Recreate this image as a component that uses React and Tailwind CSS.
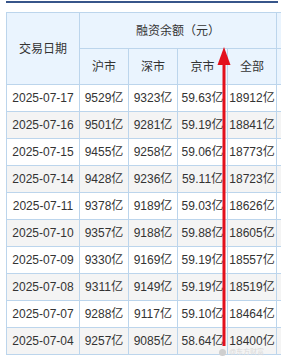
import React from "react";

const rows = [
  ["2025-07-17", "9529亿", "9323亿", "59.63亿", "18912亿"],
  ["2025-07-16", "9501亿", "9281亿", "59.19亿", "18841亿"],
  ["2025-07-15", "9455亿", "9258亿", "59.06亿", "18773亿"],
  ["2025-07-14", "9428亿", "9236亿", "59.11亿", "18723亿"],
  ["2025-07-11", "9378亿", "9189亿", "59.03亿", "18626亿"],
  ["2025-07-10", "9357亿", "9188亿", "59.88亿", "18605亿"],
  ["2025-07-09", "9330亿", "9169亿", "59.19亿", "18557亿"],
  ["2025-07-08", "9311亿", "9149亿", "59.19亿", "18519亿"],
  ["2025-07-07", "9288亿", "9117亿", "59.10亿", "18464亿"],
  ["2025-07-04", "9257亿", "9085亿", "58.64亿", "18400亿"],
];

const markets = ["沪市", "深市", "京市", "全部"];

export default function App() {
  return (
    <div
      className="relative w-[281px] h-[358px] overflow-hidden bg-white text-[12px] text-[#333]"
      style={{ fontFamily: '"Liberation Sans", "Noto Sans CJK SC", sans-serif' }}
    >
      {/* top rule */}
      <div className="ml-[6px] mt-[1px] w-[272px] h-[2px] bg-[#37558a]" />

      <table className="mt-[9px] ml-[6px] border-collapse table-fixed w-[300px]">
        <colgroup>
          <col className="w-[73px]" />
          <col className="w-[49px]" />
          <col className="w-[49px]" />
          <col className="w-[50px]" />
          <col className="w-[49px]" />
          <col className="w-[30px]" />
        </colgroup>
        <thead>
          <tr className="h-[36px] bg-[#eaf4fe]">
            <th rowSpan={2} className="border border-[#bcd5ec] font-normal text-center">
              交易日期
            </th>
            <th colSpan={4} className="border border-[#bcd5ec] font-normal text-center">
              融资余额（元）
            </th>
            <th className="border border-[#bcd5ec]" />
          </tr>
          <tr className="h-[36px] bg-[#eaf4fe]">
            {markets.map((m) => (
              <th key={m} className="border border-[#bcd5ec] font-normal text-center">
                {m}
              </th>
            ))}
            <th className="border border-[#bcd5ec]" />
          </tr>
        </thead>
        <tbody>
          {rows.map((r, i) => (
            <tr key={r[0]} className={`h-[27px] ${i % 2 ? "bg-[#f4f4f4]" : "bg-white"}`}>
              {r.map((c, j) => (
                <td key={j} className="border border-[#bcd5ec] text-center whitespace-nowrap p-0">
                  {c}
                </td>
              ))}
              <td className="border border-[#bcd5ec]" />
            </tr>
          ))}
        </tbody>
      </table>

      {/* red arrow annotation */}
      <svg className="absolute left-[216px] top-[46px]" width="17" height="302" viewBox="0 0 17 302">
        <polygon points="8,1 1.5,19 14.5,19" fill="#e3101c" />
        <rect x="6.5" y="18" width="3" height="282" fill="#e3101c" />
      </svg>

      {/* faint watermark */}
      <div className="absolute left-[219px] top-[348px] flex items-center gap-[3px] text-[7px] leading-[8px] text-[#dadada]">
        <span className="w-[7px] h-[7px] rounded-full bg-[#cfcfcf]" />
        <span>@东方财富</span>
      </div>
    </div>
  );
}
